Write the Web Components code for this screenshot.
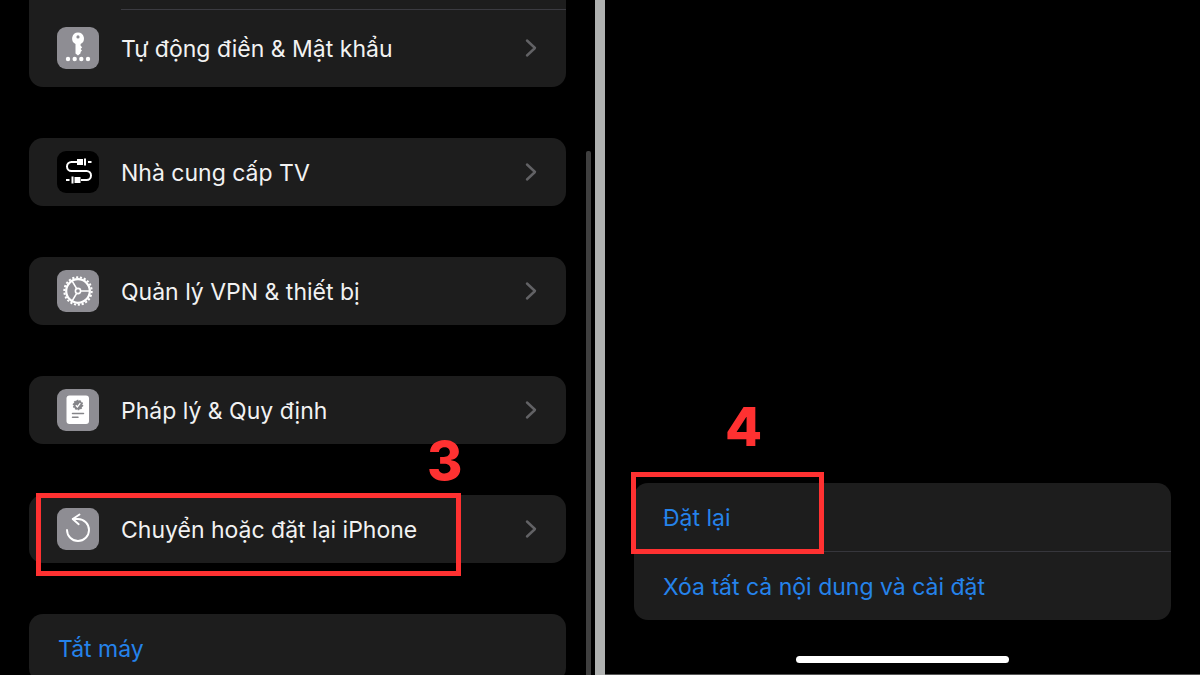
<!DOCTYPE html>
<html lang="vi">
<head>
<meta charset="utf-8">
<meta name="viewport" content="width=device-width, initial-scale=1">
<title>Cài đặt chung</title>
<style>
  body { margin: 0; background: #000; font-family: Inter, "Noto Sans", sans-serif; font-size: 23px; line-height: 32px; color: #f2f2f2; }
</style>
</head>
<body>
<guide-split>
  <phone-pane slot="left" scrollbar>
    <settings-card continued>
      <settings-row icon="key" tall separated>Tự động điền &amp; Mật khẩu</settings-row>
    </settings-card>
    <settings-card><settings-row icon="cable">Nhà cung cấp TV</settings-row></settings-card>
    <settings-card><settings-row icon="gear">Quản lý VPN &amp; thiết bị</settings-row></settings-card>
    <settings-card><settings-row icon="document">Pháp lý &amp; Quy định</settings-row></settings-card>
    <settings-card>
      <settings-row icon="reset">Chuyển hoặc đặt lại iPhone</settings-row>
      <step-mark slot="mark" class="three">3</step-mark>
    </settings-card>
    <settings-card><settings-action>Tắt máy</settings-action></settings-card>
  </phone-pane>
  <phone-pane slot="right" bottom>
    <settings-card>
      <settings-action>Đặt lại</settings-action>
      <settings-action separated>Xóa tất cả nội dung và cài đặt</settings-action>
      <step-mark slot="mark" class="four">4</step-mark>
    </settings-card>
    <home-indicator slot="footer"></home-indicator>
  </phone-pane>
</guide-split>
<script>
const ICONS = {
  key: `<g fill="#fff"><path fill-rule="evenodd" d="M21 5.500a6 6 0 0 1 2.600 11.400v1.800l1.600 1.600-1.600 1.700 1.400 1.500-1.400 1.500v1.200L21 28.600l-2.500-2.200v-9.500A6 6 0 0 1 21 5.500zm0 2.800a1.600 1.600 0 1 0 0 3.200 1.600 1.600 0 0 0 0-3.200z"/><circle cx="11" cy="32" r="2.200"/><circle cx="17.700" cy="32" r="2.200"/><circle cx="24.300" cy="32" r="2.200"/><circle cx="31" cy="32" r="2.200"/></g>`,
  cable: `<path fill="none" stroke="#fff" stroke-width="2" d="M20 11h-5.500a4.500 4.500 0 0 0 0 9h15a4.500 4.500 0 0 1 0 9H24M31 11h3.500M9 29h3.500"/><path fill="#fff" d="M20 8h6v6h-6zM27 7.500h2v7h-2zM17.500 26h6v6h-6zM14.500 25.500h2v7h-2z"/>`,
  gear: `<g fill="none" stroke="#fff"><circle cx="21" cy="21" r="11.800" stroke-width="2.200"/><circle cx="21" cy="21" r="13.700" stroke-width="2" pathLength="44" stroke-dasharray="1.100 .9"/><circle cx="21" cy="21" r="2.600" stroke-width="1.600"/><path stroke-width="1.600" d="M24 21h9M19.500 18.400 14.900 10.600M19.500 23.600 14.900 31.400"/></g>`,
  document: `<rect x="9.500" y="6.500" width="22.500" height="28.500" rx="3" fill="#fff"/><circle cx="21" cy="16" r="4.500" fill="#858589"/><circle cx="21" cy="16" r="4.600" fill="none" stroke="#858589" stroke-width="1.400" pathLength="20" stroke-dasharray="1.200 .8"/><path fill="none" stroke="#fff" stroke-width="1.300" d="m18.800 16.200 1.600 1.700 2.900-3.800"/><path fill="none" stroke="#858589" stroke-width="1.500" stroke-linecap="round" d="M15.500 24.500h11M15.500 28.300h5.500"/>`,
  reset: `<g fill="none" stroke="#fff" stroke-width="1.900" stroke-linecap="round" stroke-linejoin="round"><path d="M10 22a11 11 0 1 0 11-11h-5"/><path d="M22.500 6.500 15.700 11l6 5.200"/></g>`
};

function define(name, build) {
  customElements.define(name, class extends HTMLElement {
    connectedCallback() {
      if (!this.shadowRoot) this.attachShadow({ mode: "open" }).innerHTML = build(this);
    }
  });
}

define("guide-split", () => `
  <style>
    :host { display: grid; grid-template-columns: minmax(0, 1fr) 10px minmax(0, 1fr); height: 100vh; }
    .divider { background: #afb1b0; }
    ::slotted(*) { min-width: 0; min-height: 0; }
  </style>
  <slot name="left"></slot><div class="divider"></div><slot name="right"></slot>`);

define("phone-pane", () => `
  <style>
    :host { display: grid; position: relative; background: #000; }
    main { box-sizing: border-box; display: flex; flex-direction: column; gap: 51px; min-height: 0; padding: 0 29px; overflow-y: auto; scrollbar-width: none; }
    .thumb { display: none; position: absolute; top: 151px; right: 4px; bottom: 0; width: 5px; border-radius: 2px 2px 0 0; background: #3f3f3f; }
    :host([scrollbar]) .thumb { display: block; }
    :host([bottom]) { border-bottom: 1px solid #555; }
    :host([bottom]) main { justify-content: flex-end; gap: 36px; padding-bottom: 11px; }
  </style>
  <main><slot></slot><slot name="footer"></slot></main><div class="thumb"></div>`);

define("settings-card", () => `
  <style>
    :host { display: block; position: relative; flex: none; }
    .card { border-radius: 14px; background: #1d1d1d; overflow: hidden; }
    :host([continued]) .card { padding-top: 9px; border-radius: 0 0 14px 14px; }
  </style>
  <div class="card"><slot></slot></div><slot name="mark"></slot>`);

define("settings-row", el => `
  <style>
    :host { display: block; }
    a { box-sizing: border-box; display: flex; align-items: center; min-height: 68px; padding: 0 29px 0 28px; color: inherit; text-decoration: none; position: relative; }
    :host([tall]) a { min-height: 78px; }
    :host([separated]) a::before { content: ""; position: absolute; top: 0; left: 92px; right: 0; height: 1px; background: #3b3b41; }
    .tile { flex: none; width: 42px; height: 42px; margin-right: 22px; border-radius: 9px; background: #8e8d93; }
    :host([icon="cable"]) .tile { background: #000; }
    .label { flex: 1; min-width: 0; padding-top: 2px; white-space: nowrap; }
    .chevron { flex: none; width: 12px; height: 20px; }
  </style>
  <a href="#">
    <svg class="tile" viewBox="0 0 42 42" aria-hidden="true">${ICONS[el.getAttribute("icon")]}</svg>
    <span class="label"><slot></slot></span>
    <svg class="chevron" viewBox="0 0 12 20" aria-hidden="true"><path d="m2 2.500 8 7.500-8 7.500" fill="none" stroke="#626265" stroke-width="2.400" stroke-linecap="round" stroke-linejoin="round"/></svg>
  </a>`);

define("settings-action", () => `
  <style>
    :host { display: block; }
    :host([separated]) { border-top: 1px solid #36363c; }
    button { display: block; width: 100%; min-height: 68px; padding: 2px 29px 0; border: 0; background: none; color: #2583eb; font: inherit; text-align: left; cursor: pointer; }
  </style>
  <button type="button"><slot></slot></button>`);

define("step-mark", () => `
  <style>
    :host { position: absolute; box-sizing: border-box; border: 5px solid #ff3131; pointer-events: none; }
    :host(.three) { left: 7px; top: -2px; width: 425px; height: 83px; --number-left: 386px; --number-top: -65px; }
    :host(.four) { left: -3px; top: -11px; width: 193px; height: 82px; --number-left: 89px; --number-top: -78px; }
    strong { position: absolute; left: var(--number-left); top: var(--number-top); color: #ff3131; font-size: 54px; line-height: 56px; font-weight: 800; }
  </style>
  <strong><slot></slot></strong>`);

define("home-indicator", () => `
  <style>
    :host { display: block; flex: none; align-self: center; width: 213px; height: 7px; border-radius: 4px; background: #fff; }
  </style>`);
</script>
</body>
</html>
